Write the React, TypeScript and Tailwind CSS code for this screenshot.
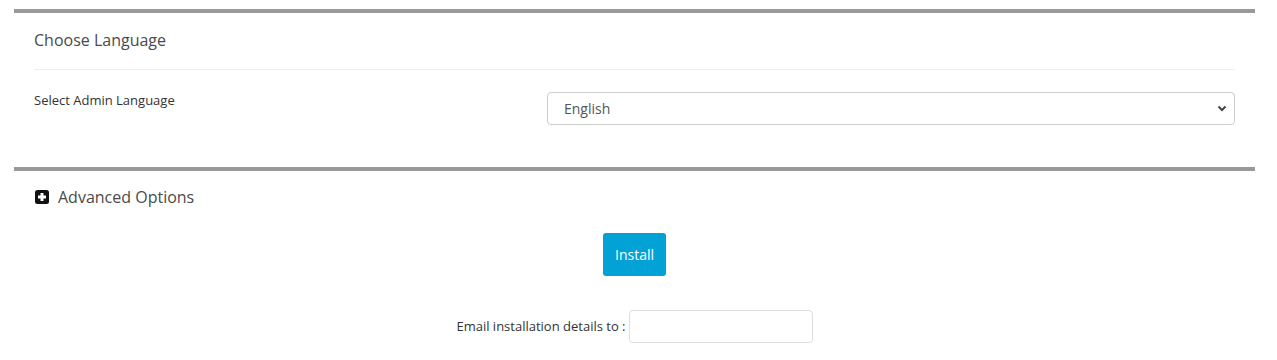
import React from 'react';

const App: React.FC = () => {
  return (
    <div className="w-[1277px] h-[360px] bg-white font-['Open_Sans',sans-serif] text-[#555]">
      <div className="ml-[14px] w-[1241px] pt-[9px]">
        {/* Choose Language */}
        <div className="border-t-[4px] border-[#999]">
          <div className="px-[20px]">
            <h3 className="h-[57px] pb-[2px] flex items-center text-[16px] text-[#4a4a4a] border-b border-[#eee]">Choose Language</h3>
            <div className="flex pt-[22px] pb-[42px]">
              <div className="w-[513px] -mt-[1px] text-[13px] text-[#333]">Select Admin Language</div>
              <div className="flex-1 relative">
                <select className="w-full h-[33px] appearance-none rounded-[4px] border border-[#ccc] bg-white pl-[16px] text-[14px] text-[#555] outline-none">
                  <option>English</option>
                </select>
                <svg className="absolute right-[8px] top-[13px] w-[10px] h-[7px] pointer-events-none" viewBox="0 0 10 7">
                  <path d="M1.5 1.5 L5 5 L8.5 1.5" fill="none" stroke="#444" strokeWidth="2" />
                </svg>
              </div>
            </div>
          </div>
        </div>

        {/* Advanced Options */}
        <div className="border-t-[4px] border-[#999]">
          <div className="px-[20px]">
            <div className="flex items-center gap-[9px] h-[50px] pt-[2px]">
              <svg className="w-[14px] h-[14px] ml-[1px]" viewBox="0 0 14 14">
                <rect x="0" y="0" width="14" height="14" rx="2.5" fill="#111" />
                <path d="M7 3 V11 M3 7 H11" stroke="#fff" strokeWidth="3" />
              </svg>
              <span className="text-[16px] text-[#4a4a4a]">Advanced Options</span>
            </div>
            <div className="flex justify-center pt-[12px]">
              <button className="w-[63px] h-[43px] rounded-[3px] bg-[#03a2d6] text-white text-[14px]">Install</button>
            </div>
            <div className="flex justify-center items-center pt-[34px] gap-[3px]">
              <span className="text-[13px] text-[#333]">Email installation details to :</span>
              <input className="w-[184px] h-[33px] rounded-[4px] border border-[#ddd] outline-none" />
            </div>
          </div>
        </div>
      </div>
    </div>
  );
};

export default App;
